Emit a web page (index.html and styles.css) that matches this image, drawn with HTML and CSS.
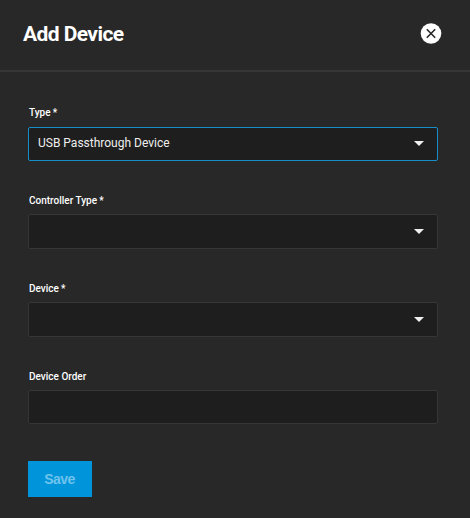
FILE: index.html
```html
<!DOCTYPE html>
<html lang="en">
<head>
<meta charset="utf-8">
<title>Add Device</title>
<link rel="stylesheet" href="styles.css">
</head>
<body>
<header class="header">
  <h1 class="title">Add Device</h1>
  <button class="close" aria-label="Close"><svg width="22" height="21" viewBox="0 0 22 21"><circle cx="11" cy="10.5" r="10.3" fill="#fff"/><path d="M6.8 6.3l8.4 8.4M15.2 6.3l-8.4 8.4" stroke="#282828" stroke-width="1.6"/></svg></button>
</header>
<form class="form">
  <div class="field"><span class="label">Type <span class="star">*</span></span><div class="control active"><span>USB Passthrough Device</span><i class="arrow"></i></div></div>
  <div class="field"><span class="label">Controller Type <span class="star">*</span></span><div class="control tall"><span></span><i class="arrow"></i></div></div>
  <div class="field"><span class="label">Device <span class="star">*</span></span><div class="control tall"><span></span><i class="arrow"></i></div></div>
  <div class="field"><span class="label">Device Order</span><div class="control plain"></div></div>
  <button class="save" type="button">Save</button>
</form>
</body>
</html>
```
FILE: styles.css
```css
* { box-sizing: border-box; }
body { margin: 0; height: 518px; background: #282828; color: #fff; font-family: Roboto, sans-serif; overflow: hidden; }
.header { height: 72px; padding: 0 28px 3px 23px; display: flex; align-items: center; justify-content: space-between; border-bottom: 2px solid #363636; }
.title { margin: 0; font: 700 21px/26px Roboto, sans-serif; letter-spacing: -0.58px; }
.close { padding: 0; border: 0; background: none; display: flex; }
.form { padding: 34px 32px 0 28px; }
.field { height: 88px; }
.label { display: block; height: 21px; padding-left: 1px; font-size: 10px; line-height: 14px; font-weight: 500; }
.star { margin-left: -0.4px; }
.control { height: 34px; border: 1px solid #363636; border-radius: 2px; background: #1e1e1e; padding: 0 13px 2px 9px; display: flex; align-items: center; justify-content: space-between; font-size: 12px; color: #eee; }
.tall { height: 35px; margin-top: -1px; padding-bottom: 0; }
.plain { margin-top: -1px; }
.active { border-color: #168fc7; }
.arrow { border: 5px solid transparent; border-top-color: #f0f0f0; border-bottom: 0; }
.save { margin-top: 3px; padding: 0 1px 0 0; display: block; width: 64px; height: 36px; border: 0; background: #0095db; color: #70c3eb; font: 700 14px "Liberation Sans", sans-serif; letter-spacing: -0.6px; }
```
